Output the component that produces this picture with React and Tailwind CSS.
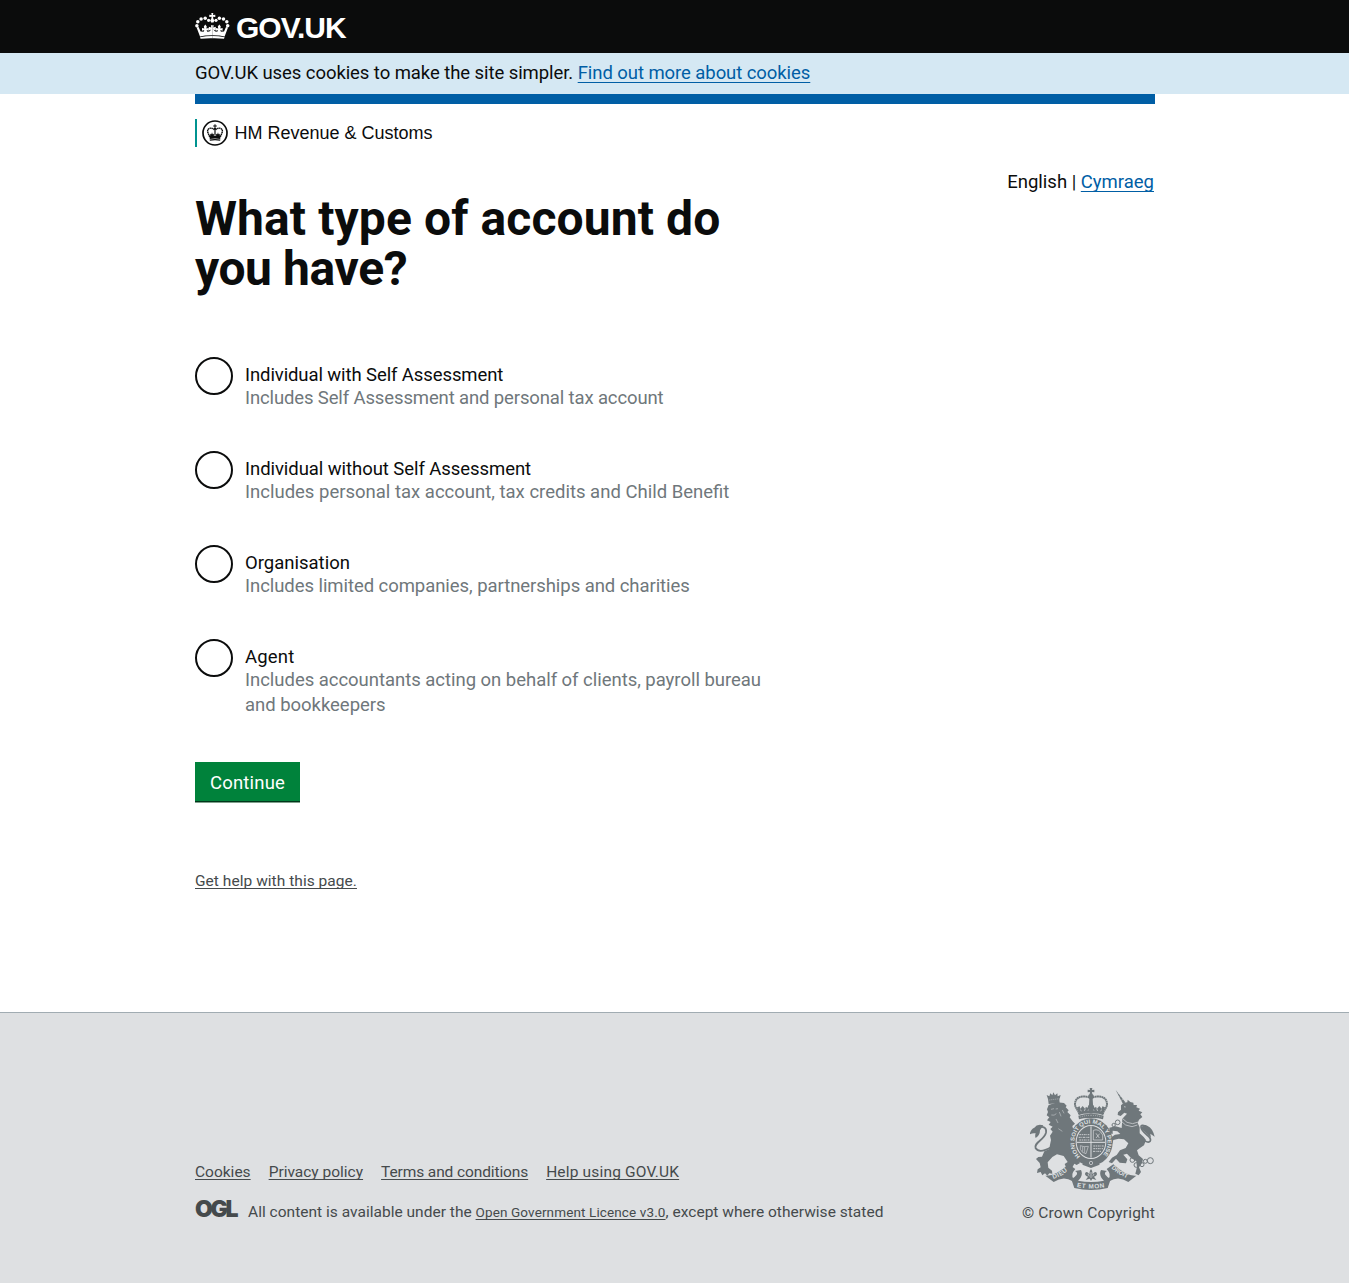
import React from "react";

const LINK = "underline decoration-1 [text-decoration-skip-ink:none]";

const OPTIONS = [
  {
    label: "Individual with Self Assessment",
    labelClass: "tracking-[-0.1px]",
    hint: "Includes Self Assessment and personal tax account",
    hintClass: "tracking-[-0.13px]",
  },
  {
    label: "Individual without Self Assessment",
    labelClass: "tracking-[-0.06px]",
    hint: "Includes personal tax account, tax credits and Child Benefit",
    hintClass: "",
  },
  {
    label: "Organisation",
    labelClass: "",
    hint: "Includes limited companies, partnerships and charities",
    hintClass: "tracking-[-0.06px]",
  },
  {
    label: "Agent",
    labelClass: "tracking-[0.2px]",
    hint: "Includes accountants acting on behalf of clients, payroll bureau and bookkeepers",
    hintClass: "tracking-[-0.03px]",
  },
];

function HeaderCrown() {
  const half = (
    <g>
      <circle cx="1.9" cy="12.8" r="1.75" />
      <circle cx="2.8" cy="8.8" r="1.75" />
      <circle cx="6.1" cy="5.9" r="1.75" />
      <circle cx="10.2" cy="5.3" r="1.75" />
      <circle cx="13.6" cy="7.3" r="1.6" />
      <path d="M1.6 14.6L3.6 14L5.6 18.6L8.7 18.8L9.3 17L7 17.8V14.9L9.3 15.6L8.8 13.6L10.3 11.6L11.8 13.6L11.3 15.6L13.6 14.9V17.8L11.6 17L12.3 18.8L14.4 18.6L16.3 16.6L13.8 17.4V13.8L16.3 14.6L15.9 12.3H17.3V22.3Q10 22.2 5 23.4Z" />
      <path d="M5 24.2Q11 22.9 17.3 22.9V25.3Q10.5 25.2 5.6 25.7Z" />
    </g>
  );
  return (
    <svg className="h-[26px] w-[35px]" viewBox="0 0 35 26" fill="#fff">
      {half}
      <g transform="translate(34.6 0) scale(-1 1)">{half}</g>
      <path d="M16.3 0h2l-.3 2 2.3-.3v2.4l-2.3-.3.4 2.2 1 1.2-.9 2.2h-2.400l-.9-2.200 1-1.200.400-2.200-2.300.3V1.700l2.300.3z" />
    </svg>
  );
}

function HmrcCrest() {
  const half = (
    <g>
      <path d="M12.3 9.8C10.8 7.4 5.7 7.5 5.6 11C5.6 13 7 14.4 7.6 16.8" fill="none" stroke="#0b0c0c" strokeWidth="1.4" strokeDasharray="1.5 .4" />
      <path d="M7.4 16l1-.7-.3-1.500 1.300.4.6-1.900.7 1.900 1.400-.4-.5 1.500 1.400.5V18.400q-3 0-5.200.6z" />
      <path d="M7.6 19.5Q10 18.9 13 18.9V20.3Q10 20.3 7.9 20.7Z" />
    </g>
  );
  return (
    <svg className="h-[26px] w-[26px]" viewBox="0 0 26 26" fill="#0b0c0c">
      <circle cx="13" cy="13" r="12" fill="none" stroke="#0b0c0c" strokeWidth="1.7" />
      {half}
      <g transform="translate(26 0) scale(-1 1)">{half}</g>
      <path d="M12.5 4.300h1v1.300h1.300v1h-1.300v1.200l.9.800-.8 1.200V15h-1.200V9.800l-.8-1.200.9-.8V6.600h-1.300v-1h1.300z" />
    </svg>
  );
}

function RoyalArms() {
  const G = "#6f777b";
  const L = "#dee0e2";
  const crownHalf = (
    <g>
      <path d="M213 56C202 46 166 44 165 72C165 84 174 88 178 103" fill="none" stroke={G} strokeWidth="6" strokeDasharray="5.500 1" />
      <path d="M171 82l8-3 2 7 7-8 7 8 3-6 4 4 4-9h7v26q-22-1-36 4z" />
      <path d="M180 89l5 4M196 86l-3 7M204 92l4-5" stroke={L} strokeWidth="2" />
      <path d="M175 107Q193 101 213.500 101V114Q193 113 177 118Z" />
      <path d="M181 111q14-5 32-5" stroke={L} strokeWidth="1.500" fill="none" strokeDasharray="3 3" />
    </g>
  );
  return (
    <svg className="h-[102px] w-[125px]" viewBox="30 24 375 306" fill={G}>
      <defs>
        <path id="garter" d="M181 229A50 56 0 1 1 245 229" />
        <path id="ribbon-left" d="M100 297Q128 289 151 264" />
        <path id="ribbon-mid" d="M170 321Q213 330 256 321" />
        <path id="ribbon-right" d="M274 264Q298 287 328 297" />
      </defs>

      {/* lion */}
      <path d="M84 57l-4-12 8 4 3-9 6 6 3-9 5 9 7-6 1 9 9-4-4 14 1 10-33 3z" />
      <path d="M88 60l31-4" stroke={L} strokeWidth="1.500" strokeDasharray="3 3" />
      <path d="M86 75L112 67L132 69L140 77L137 82L146 91L142 96L152 106L149 112L158 124L165 131L157 138L160 150L154 165L156 184L152 199L162 210L166 226L174 240L180 249L170 255L163 251L156 264L148 258L138 262L134 252L143 246L131 228L111 223L97 231L83 247L85 263L96 272L97 281L88 280L82 287L75 280L67 286L62 276L51 279L53 268L62 262L59 249L48 237L55 231L66 230L73 214L88 207L90 194L93 180L90 167L98 155L91 147L98 140L86 134L92 126L81 121L88 112L80 106L84 96L81 88Z" />
      <path d="M93 88l9-2M107 87l7-1M94 105q9 3 15-4M118 96l5 13M127 90l5 10M108 117l6 12M115 146l12 8" stroke={L} strokeWidth="1.400" fill="none" />
      <path d="M94 201C77 211 57 220 47 205C40 187 73 181 78 158C81 139 65 139 57 143" fill="none" stroke={G} strokeWidth="5.500" />
      <path d="M70 136Q51 131 43 143Q32 147 29 163Q38 158 47 160Q44 168 47 174Q60 166 60 151Z" />

      {/* unicorn */}
      <path d="M287 30L316 67L309 72Z" />
      <path d="M292 43l4-3M298 52l4-4M304 61l5-4" stroke={L} strokeWidth="1.500" />
      <path d="M303 76L312 68L322 67L323 59L331 66L340 68L341 75L351 75L349 82L360 86L356 92L367 97L361 103L367 111L357 119L353 129L359 142L359 160L371 171L378 180L372 196L361 203L351 211L356 226L369 237L366 249L357 262L363 276L356 286L346 281L351 261L349 244L333 234L321 221L310 224L322 238L318 250L299 248L288 236L276 250L266 246L276 233L290 225L300 211L317 204L325 190L312 178L296 176L280 180L277 191L269 188L270 174L285 164L301 162L292 154L278 152L278 162L269 160L268 143L287 139L305 144L307 116L321 101L313 98L302 108L293 105L294 97L303 89Z" />
      <path d="M312 80l5 1M308 116l13 11 17 4 17-5M305 125l12 10 19 5 16-5" stroke={L} strokeWidth="2" fill="none" />
      <path d="M366 178C393 197 399 179 381 165C357 145 358 129 377 139" fill="none" stroke={G} strokeWidth="5" />
      <path d="M363 144Q371 130 383 138Q398 145 404 170L391 161L393 174L378 159Z" />
      <g fill="none" stroke={G} strokeWidth="3">
        <circle cx="293" cy="127" r="7" /><circle cx="281" cy="135" r="5" />
        <circle cx="337" cy="240" r="7" /><circle cx="349" cy="255" r="7" />
        <circle cx="366" cy="254" r="6" /><circle cx="376" cy="244" r="6" /><circle cx="391" cy="242" r="9" />
      </g>

      {/* crown */}
      {crownHalf}
      <g transform="translate(426 0) scale(-1 1)">{crownHalf}</g>
      <path d="M209 24h8l-1 6 7-1v8l-7-1 1 6q6 3 4 9l-3 5 2 35h-14l2-35-3-5q-2-6 4-9l1-6-7 1v-8l7 1z" />

      {/* garter and shield */}
      <ellipse cx="213" cy="186" rx="65" ry="71" />
      <ellipse cx="213" cy="186" rx="46" ry="51" fill={L} />
      <text fill={L} fontFamily="Liberation Sans, sans-serif" fontSize="17" fontWeight="700">
        <textPath href="#garter" textLength="256" lengthAdjust="spacingAndGlyphs">HONI SOIT QUI MAL Y PENSE</textPath>
      </text>
      <ellipse cx="213" cy="186" rx="43" ry="48" />
      <path d="M213 139v94M171 187h84" stroke={L} strokeWidth="3" />
      <path d="M178 164h30M176 172h32M178 180h30M220 198h31M220 206h29M219 214h25" stroke={L} strokeWidth="2.500" strokeDasharray="6 2 3 2" />
      <path d="M220 151q17-7 28 14v15h-28zM228 160l10 14M239 161l-11 13" stroke={L} strokeWidth="2" fill="none" />
      <path d="M181 197v11q5 12 17 13l7-22-13 1zM188 200v15M194 201v17" stroke={L} strokeWidth="1.700" fill="none" />
      <path d="M195 238q18 6 36 0l8 16-26 10-26-10z" />
      <circle cx="213" cy="249" r="5" fill="none" stroke={L} strokeWidth="2" />

      {/* ribbon */}
      <path d="M76 287Q105 290 146 253L166 267Q150 285 161 296L158 304Q131 286 101 306Z" />
      <path d="M349 287Q320 290 280 253L260 267Q276 285 265 296L268 304Q295 286 325 306Z" />
      <path d="M154 298Q163 293 170 284Q174 277 165 273L183 270Q191 286 174 302Q213 310 252 302Q235 286 243 270L261 273Q252 277 256 284Q263 293 272 298L263 324Q213 336 163 324Z" />
      <g fill={L} fontFamily="Liberation Sans, sans-serif" fontSize="19" fontWeight="700">
        <text><textPath href="#ribbon-left" textLength="50">DIEU</textPath></text>
        <text><textPath href="#ribbon-mid" textLength="84">ET MON</textPath></text>
        <text fontSize="18"><textPath href="#ribbon-right" textLength="56">DROIT</textPath></text>
      </g>
      <path d="M213 267q6 7 5 16 7-11 12-5 4 7-8 12l7 10-12-4-4 7-4-7-12 4 7-10q-12-5-8-12 5-6 12 5-1-9 5-16z" />
      <path d="M213 276v18M204 282l4 7M222 282l-4 7" stroke={L} strokeWidth="2" />
    </svg>
  );
}

export default function App() {
  return (
    <div className="flex min-h-[1283px] flex-col bg-white font-['Roboto',sans-serif] text-[18.5px] text-[#0b0c0c]">
      <header className="h-[53px] bg-[#0b0c0c] pl-px">
        <div className="mx-auto flex w-[960px] pt-[13px]">
          <HeaderCrown />
          <span className="ml-[6px] font-['Liberation_Sans',sans-serif] text-[30px] leading-[30px] font-bold tracking-[-1px] text-white">
            GOV.UK
          </span>
        </div>
      </header>

      <div className="h-[41px] bg-[#d5e8f3] pl-px">
        <p className="mx-auto w-[960px] pt-[8px] leading-[25px] tracking-[-0.07px]">
          GOV.UK uses cookies to make the site simpler.{" "}
          <a href="#" className={`${LINK} text-[#005ea5] underline-offset-[3px]`}>
            Find out more about cookies
          </a>
        </p>
      </div>

      <div className="pl-px">
        <main className="mx-auto h-[918px] w-[960px] border-t-[10px] border-[#005ea5]">
          <div className="mt-[15px] flex h-[28px] items-center border-l-2 border-[#009390] pl-[5px]">
            <HmrcCrest />
            <span className="ml-[6.5px] font-['Liberation_Sans',sans-serif] text-[18px] leading-[28px]">
              HM Revenue &amp; Customs
            </span>
          </div>

          <p className="mt-[23px] h-[25px] pr-px text-right leading-[25px]">
            English |{" "}
            <a href="#" className={`${LINK} text-[#005ea5] underline-offset-[3px]`}>
              Cymraeg
            </a>
          </p>

          <h1 className="-mt-px w-[600px] text-[48px] leading-[50px] font-bold">
            <span className="block tracking-[0.1px]">What type of account do</span>
            <span className="block tracking-[-0.4px]">you have?</span>
          </h1>

          <form className="mt-[63px]">
            <div className="flex w-[580px] flex-col gap-[44px]">
              {OPTIONS.map((o) => (
                <label key={o.label} className="flex gap-3">
                  <span className="h-[38px] w-[38px] shrink-0 rounded-full border-2 border-[#0b0c0c] bg-white" />
                  <span className="flex flex-col pt-[6px]">
                    <span className={`h-[23px] leading-[25px] ${o.labelClass}`}>{o.label}</span>
                    <span className={`-mb-[4px] leading-[25px] text-[#6f777b] ${o.hintClass}`}>{o.hint}</span>
                  </span>
                </label>
              ))}
            </div>
            <button
              type="button"
              className="mt-[48px] flex h-[39px] w-[105px] items-center justify-center bg-[#00823b] pt-[4px] leading-[25px] tracking-[0.18px] text-white shadow-[0_1px_0_#00361a,0_2px_0_#80a08c]"
            >
              Continue
            </button>
          </form>

          <p className="mt-[70px] text-[15.5px] leading-[20px] tracking-[0.04px] text-[#454a4c]">
            <a href="#" className={`${LINK} underline-offset-2`}>Get help with this page.</a>
          </p>
        </main>
      </div>

      <footer className="h-[271px] border-t border-[#a1acb2] bg-[#dee0e2] pl-px text-[15.5px] leading-[20px] text-[#454a4c]">
        <div className="mx-auto flex w-[960px] justify-between">
          <div className="pt-[149px]">
            <nav className="flex gap-[18px]">
              <a href="#" className={`${LINK} underline-offset-2`}>Cookies</a>
              <a href="#" className={`${LINK} underline-offset-2`}>Privacy policy</a>
              <a href="#" className={`${LINK} tracking-[-0.11px] underline-offset-2`}>Terms and conditions</a>
              <a href="#" className={`${LINK} tracking-[0.17px] underline-offset-2`}>Help using GOV.UK</a>
            </nav>
            <div className="mt-[20px] flex">
              <span className="-mt-[3px] w-[53px] font-['Inter',sans-serif] text-[23px] leading-[20px] font-black tracking-[-2.3px]">
                OGL
              </span>
              <p className="tracking-[0.02px]">
                All content is available under the{" "}
                <a href="#" className={`${LINK} text-[13.5px] tracking-[0.12px] underline-offset-2`}>
                  Open Government Licence v3.0
                </a>
                , except where otherwise stated
              </p>
            </div>
          </div>
          <div className="flex flex-col items-end pt-[75px]">
            <RoyalArms />
            <span className="mt-[13px] tracking-[0.16px]">© Crown Copyright</span>
          </div>
        </div>
      </footer>
    </div>
  );
}
